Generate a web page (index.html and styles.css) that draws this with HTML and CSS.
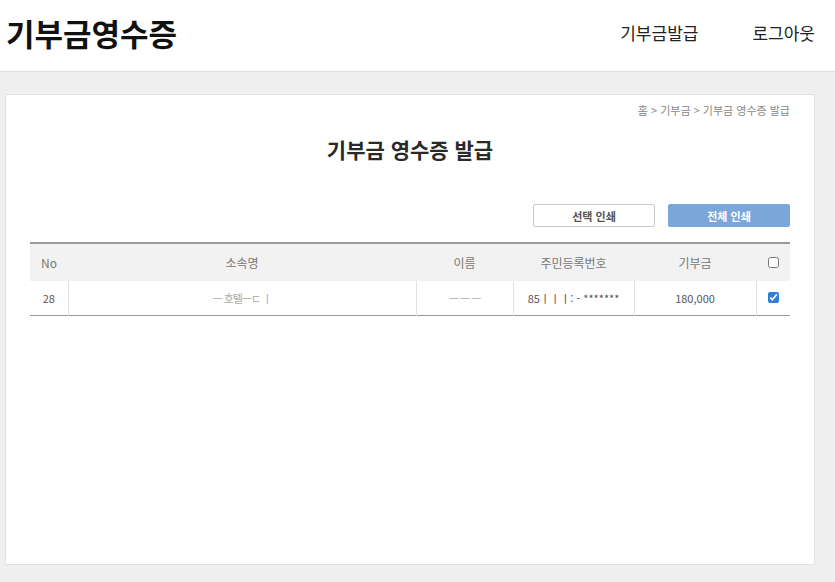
FILE: index.html
```html
<!DOCTYPE html>
<html lang="ko">
<head>
    <meta charset="UTF-8">
    <meta name="viewport" content="width=device-width, initial-scale=1.0">
    <title>기부금영수증</title>
    <link rel="stylesheet" href="styles.css">
</head>
<body>
    <header class="top-bar">
        <h1 class="logo">기부금영수증</h1>
        <nav class="menu">
            <a href="#">기부금발급</a>
            <a href="#">로그아웃</a>
        </nav>
    </header>

    <main class="wrap">
        <section class="card">
            <div class="breadcrumb">홈 &gt; 기부금 &gt; 기부금 영수증 발급</div>
            <h2 class="page-title">기부금 영수증 발급</h2>

            <div class="actions">
                <button class="btn btn-line">선택 인쇄</button>
                <button class="btn btn-blue">전체 인쇄</button>
            </div>

            <table class="receipt-table">
                <thead>
                    <tr>
                        <th class="col-no">No</th>
                        <th class="col-org">소속명</th>
                        <th class="col-name">이름</th>
                        <th class="col-id">주민등록번호</th>
                        <th class="col-amount">기부금</th>
                        <th class="col-check"><input type="checkbox"></th>
                    </tr>
                </thead>
                <tbody>
                    <tr>
                        <td class="col-no">28</td>
                        <td class="blur">ㅡ 호텔ㅡㄷ ㅣ</td>
                        <td class="blur">ㅡ ㅡ ㅡ</td>
                        <td>85ㅣㅣㅣ: - *******</td>
                        <td>180,000</td>
                        <td class="col-check"><input type="checkbox" checked></td>
                    </tr>
                </tbody>
            </table>
        </section>
    </main>
</body>
</html>
```

FILE: styles.css
```css
/* 기본 */
body {
    margin: 0;
    font-family: "Noto Sans CJK KR", "Noto Sans", sans-serif;
    background-color: #efefef;
    color: #333;
}

.top-bar {
    display: flex;
    align-items: center;
    justify-content: space-between;
    height: 72px;
    padding: 0 20px 0 6px;
    background-color: #fff;
    border-bottom: 1px solid #dedede;
    box-sizing: border-box;
}

.logo {
    margin: 0 0 6px;
    font-size: 31px;
    font-weight: bold;
    color: #111;
}

.menu {
    display: flex;
    gap: 54px;
    margin-bottom: 6px;
}

.menu a {
    font-size: 17px;
    color: #222;
    text-decoration: none;
}

.wrap {
    padding: 22px 20px 16px 5px;
}

.card {
    height: 471px;
    padding: 7px 24px 0 24px;
    background-color: #fff;
    border: 1px solid #e2e2e2;
    box-sizing: border-box;
}

.breadcrumb {
    text-align: right;
    font-size: 11px;
    color: #888;
}

.page-title {
    margin: 16px 0 0;
    text-align: center;
    font-size: 21px;
    font-weight: bold;
    color: #2a2a2a;
}

.actions {
    display: flex;
    justify-content: flex-end;
    gap: 13px;
    margin-top: 40px;
}

.btn {
    width: 122px;
    height: 23px;
    font-family: inherit;
    font-size: 11px;
    font-weight: bold;
    border-radius: 2px;
    cursor: pointer;
}

.btn-line {
    background-color: #fff;
    border: 1px solid #c9c9c9;
    color: #555;
}

.btn-blue {
    background-color: #7ba6da;
    border: 1px solid #7ba6da;
    color: #fff;
}

.receipt-table {
    width: 100%;
    margin-top: 15px;
    table-layout: fixed;
    border-collapse: collapse;
    border-top: 2px solid #9a9a9a;
    border-bottom: 1px solid #9a9a9a;
}

.receipt-table th {
    height: 37px;
    padding: 0;
    background-color: #f2f2f2;
    font-size: 12px;
    font-weight: normal;
    color: #777;
}

.receipt-table td {
    height: 34px;
    padding: 0;
    text-align: center;
    font-size: 11px;
    color: #555;
    border-left: 1px solid #e2e2e2;
}

.receipt-table td:first-child {
    border-left: none;
}

.receipt-table .col-no { width: 38px; }
.receipt-table .col-name { width: 97px; }
.receipt-table .col-id { width: 121px; }
.receipt-table .col-amount { width: 122px; }
.receipt-table .col-check { width: 34px; }

.receipt-table input[type="checkbox"] {
    width: 11px;
    height: 11px;
    margin: 0;
    accent-color: #2f7fd8;
}

.blur {
    color: #aaa !important;
    letter-spacing: -1px;
}
```
